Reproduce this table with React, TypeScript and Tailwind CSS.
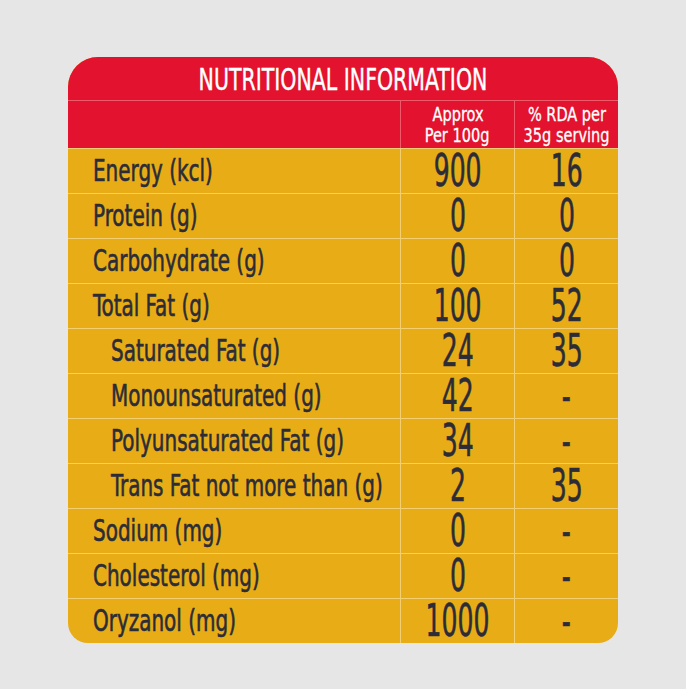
const rows: { label: string; per100: string; rda: string; indent?: boolean }[] = [
  { label: "Energy (kcl)", per100: "900", rda: "16" },
  { label: "Protein (g)", per100: "0", rda: "0" },
  { label: "Carbohydrate (g)", per100: "0", rda: "0" },
  { label: "Total Fat (g)", per100: "100", rda: "52" },
  { label: "Saturated Fat (g)", per100: "24", rda: "35", indent: true },
  { label: "Monounsaturated (g)", per100: "42", rda: "-", indent: true },
  { label: "Polyunsaturated Fat (g)", per100: "34", rda: "-", indent: true },
  { label: "Trans Fat not more than (g)", per100: "2", rda: "35", indent: true },
  { label: "Sodium (mg)", per100: "0", rda: "-" },
  { label: "Cholesterol (mg)", per100: "0", rda: "-" },
  { label: "Oryzanol (mg)", per100: "1000", rda: "-" },
];

export default function App() {
  return (
    <div
      className="flex h-[689px] w-[686px] justify-center bg-[#e6e6e6] pt-[57px]"
      style={{ fontFamily: '"DejaVu Sans Condensed", "DejaVu Sans", sans-serif' }}
    >
      <div className="h-[586px] w-[550px] overflow-hidden rounded-t-[30px] rounded-b-[20px] bg-[#e8ac17]">
        <div className="flex h-[44px] items-center justify-center border-b border-[#ef5a6a] bg-[#e3122e] pt-[3px] text-white">
          <span className="inline-block scale-x-[0.76] whitespace-nowrap text-[30px] leading-[30px] [-webkit-text-stroke:0.4px_#ffffff]">
            NUTRITIONAL INFORMATION
          </span>
        </div>
        <div className="grid h-[47px] grid-cols-[332px_114px_104px] bg-[#e3122e] text-white">
          <div />
          <div className="flex flex-col items-center justify-center border-l border-[#ef5a6a] text-[19px] leading-[21px] [-webkit-text-stroke:0.3px_#ffffff]">
            <span className="inline-block scale-x-[0.85] whitespace-nowrap">Approx</span>
            <span className="inline-block scale-x-[0.85] whitespace-nowrap">Per 100g</span>
          </div>
          <div className="flex flex-col items-center justify-center border-l border-[#ef5a6a] text-[19px] leading-[21px] [-webkit-text-stroke:0.3px_#ffffff]">
            <span className="inline-block scale-x-[0.85] whitespace-nowrap">% RDA per</span>
            <span className="inline-block scale-x-[0.85] whitespace-nowrap">35g serving</span>
          </div>
        </div>
        {rows.map((row) => (
          <div
            key={row.label}
            className="grid h-[45px] grid-cols-[332px_114px_104px] border-t border-[#f3cf72] text-[#2b2c38] first:border-t-0 [-webkit-text-stroke:0.6px_#2b2c38]"
          >
            <div className={`flex items-center ${row.indent ? "pl-[43px]" : "pl-[25px]"}`}>
              <span className="inline-block origin-left scale-x-[0.74] whitespace-nowrap text-[30px] leading-[30px]">
                {row.label}
              </span>
            </div>
            <div className="flex items-center justify-center border-l border-[#f3cf72]">
              <span className="inline-block scale-x-[0.62] whitespace-nowrap text-[45px] leading-[38px]">
                {row.per100}
              </span>
            </div>
            <div className="flex items-center justify-center border-l border-[#f3cf72]">
              <span className="inline-block scale-x-[0.62] whitespace-nowrap text-[45px] leading-[38px]">
                {row.rda}
              </span>
            </div>
          </div>
        ))}
      </div>
    </div>
  );
}
